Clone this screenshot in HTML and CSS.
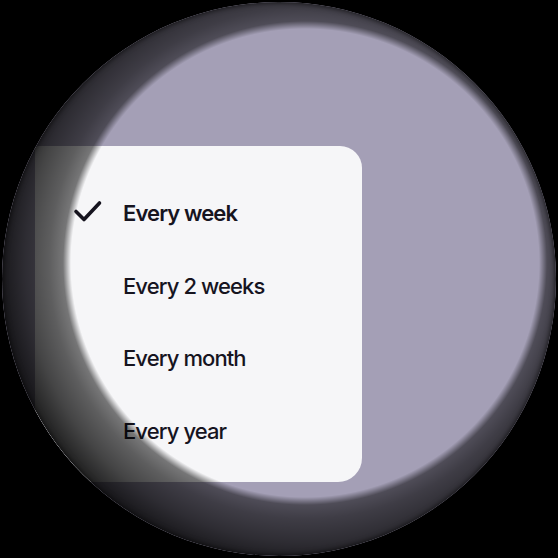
FILE: index.html
```html
<!DOCTYPE html>
<html>
<head>
<meta charset="utf-8">
<link rel="stylesheet" href="styles.css">
</head>
<body>
<div class="stage">
  <div class="lens">
    <div class="menu">
      <div class="item selected">
        <svg class="check" width="32" height="26" viewBox="0 0 32 26"><polyline points="4,13.5 12,21.5 27.5,5" fill="none" stroke="#16141f" stroke-width="3.6" stroke-linecap="round" stroke-linejoin="round"/></svg>
        <span class="label">Every week</span>
      </div>
      <div class="item"><span class="label">Every 2 weeks</span></div>
      <div class="item"><span class="label">Every month</span></div>
      <div class="item"><span class="label">Every year</span></div>
    </div>
    <div class="shade"></div>
  </div>
</div>
</body>
</html>
```
FILE: styles.css
```css
html, body {
  margin: 0;
  padding: 0;
  background: #000;
}
.stage {
  width: 558px;
  height: 558px;
  padding: 2px;
  box-sizing: border-box;
  background: #000;
}
.lens {
  position: relative;
  width: 554px;
  height: 554px;
  border-radius: 50%;
  overflow: hidden;
  background: #a49fb6;
  padding: 144px 0 0 33px;
  box-sizing: border-box;
}
.menu {
  width: 327px;
  height: 336px;
  background: #f6f6f8;
  border-radius: 4px 22px 24px 4px;
  padding-top: 31px;
  box-sizing: border-box;
  display: flex;
  flex-direction: column;
}
.item {
  height: 72.5px;
  display: flex;
  align-items: center;
  padding-left: 88px;
  position: relative;
  font-family: Inter, "Liberation Sans", sans-serif;
  font-size: 22px;
  font-weight: 500;
  letter-spacing: -0.9px;
  color: #16141f;
}
.item.selected .label {
  font-weight: 600;
}
.check {
  position: absolute;
  left: 37px;
  top: 21px;
}
.shade {
  position: absolute;
  inset: 0;
  border-radius: 50%;
  pointer-events: none;
  background: radial-gradient(circle at 303px 261px,
    rgba(0,0,0,0) 0,
    rgba(0,0,0,0) 234px,
    rgba(0,0,0,0.52) 242px,
    rgba(0,0,0,0.62) 256px,
    rgba(0,0,0,0.72) 280px,
    rgba(0,0,0,0.83) 300px,
    rgba(0,0,0,0.93) 325px,
    #000 360px);
  box-shadow: inset 0 0 5px 1px rgba(0,0,0,0.6);
}
```
